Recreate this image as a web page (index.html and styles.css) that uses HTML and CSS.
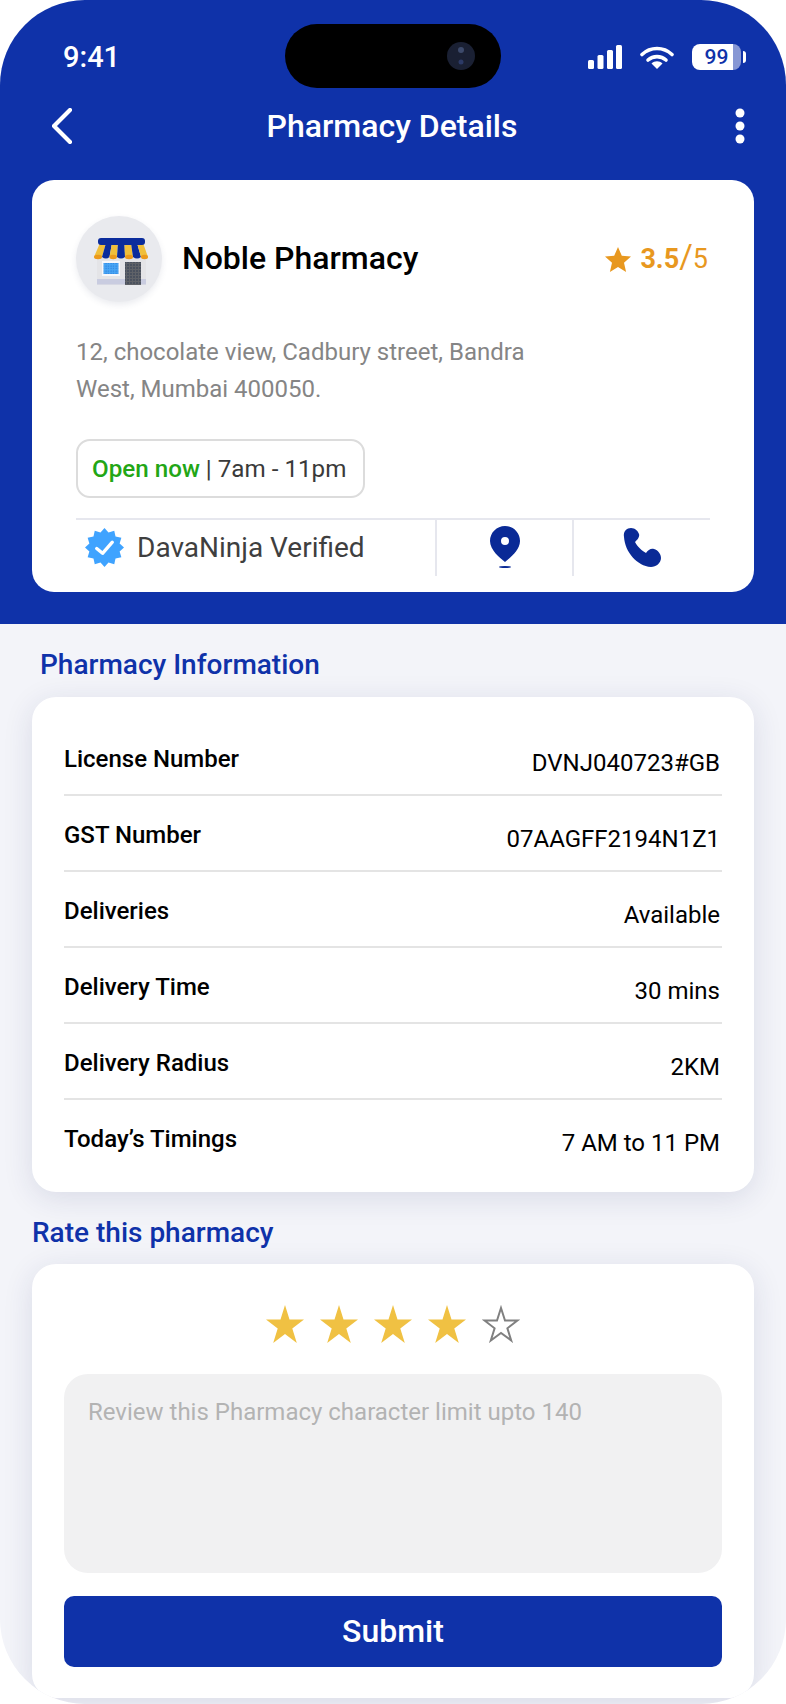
FILE: index.html
```html
<!DOCTYPE html>
<html lang="en">
<head>
    <meta charset="UTF-8">
    <meta name="viewport" content="width=device-width, initial-scale=1.0">
    <title>Pharmacy Details</title>
    <link rel="stylesheet" href="styles.css">
</head>
<body>
    <div class="phone">
        <header class="hero">
            <div class="status-bar">
                <span class="time">9:41</span>
                <div class="island">
                    <svg class="camera" viewBox="0 0 28 28">
                        <circle cx="14" cy="14" r="14" fill="#1a2033"/>
                        <circle cx="14" cy="8" r="3" fill="#3d4a6b"/>
                        <circle cx="14" cy="20" r="2.500" fill="#2c3a66"/>
                    </svg>
                </div>
                <div class="status-icons">
                    <svg class="signal" viewBox="0 0 34 24">
                        <rect x="0" y="15" width="6" height="9" rx="1.500"/>
                        <rect x="9.500" y="10" width="6" height="14" rx="1.500"/>
                        <rect x="19" y="5" width="6" height="19" rx="1.500"/>
                        <rect x="28" y="0" width="6" height="24" rx="1.500"/>
                    </svg>
                    <svg class="wifi" viewBox="0 0 34 24">
                        <path d="M2 9.500C10.500 1.500 23.500 1.500 32 9.500" fill="none" stroke="#fff" stroke-width="3.600" stroke-linecap="round"/>
                        <path d="M8 15C13 10.500 21 10.500 26 15" fill="none" stroke="#fff" stroke-width="3.600" stroke-linecap="round"/>
                        <path d="M11.500 18.500C14.500 15.500 19.500 15.500 22.500 18.500L17 24Z" fill="#fff"/>
                    </svg>
                    <div class="battery">99</div>
                </div>
            </div>

            <nav class="top-nav">
                <svg class="back" viewBox="0 0 20 36">
                    <path d="M18 2L2 18L18 34" fill="none" stroke="#fff" stroke-width="4.200" stroke-linecap="round" stroke-linejoin="round"/>
                </svg>
                <h1>Pharmacy Details</h1>
                <svg class="more" viewBox="0 0 10 36">
                    <circle cx="5" cy="5" r="4.500"/>
                    <circle cx="5" cy="18" r="4.500"/>
                    <circle cx="5" cy="31" r="4.500"/>
                </svg>
            </nav>

            <section class="store-card">
                <div class="store-top">
                    <div class="avatar">
                        <svg viewBox="6 6 86 86">
                            <defs>
                                <pattern id="speck" width="3" height="3" patternUnits="userSpaceOnUse">
                                    <rect width="3" height="3" fill="#5f6268"/>
                                    <circle cx="1" cy="1" r="0.800" fill="#2f3a52"/>
                                </pattern>
                                <pattern id="pane" width="2.500" height="2.500" patternUnits="userSpaceOnUse">
                                    <rect width="2.500" height="2.500" fill="#48a6f5"/>
                                    <circle cx="1" cy="1" r="0.600" fill="#2474d6"/>
                                </pattern>
                            </defs>
                            <rect x="27" y="46" width="49" height="29" fill="#e4e4e7"/>
                            <rect x="32" y="51" width="18" height="15" fill="#f6f7fb"/>
                            <rect x="33.500" y="53" width="15" height="11" fill="url(#pane)"/>
                            <rect x="27" y="69" width="28" height="5.500" fill="#c9cce0"/>
                            <rect x="71" y="69" width="5" height="5.500" fill="#c9cce0"/>
                            <rect x="55" y="52" width="16" height="23" fill="url(#speck)"/>
                            <path d="M30 33H36L32 47Q28 50 24 47Z" fill="#f0bf3b"/>
                            <path d="M36 33H42L39.500 47Q36 50 32 47Z" fill="#0b2c9c"/>
                            <path d="M42 33H48L47 47Q43 50 39.500 47Z" fill="#f0bf3b"/>
                            <path d="M48 33H54.500L55 47Q51 50 47 47Z" fill="#0b2c9c"/>
                            <path d="M54.500 33H61L63 47Q59 50 55 47Z" fill="#f0bf3b"/>
                            <path d="M61 33H67L71 47Q67 50 63 47Z" fill="#0b2c9c"/>
                            <path d="M67 33H73L78 47Q74.500 50 71 47Z" fill="#f0bf3b"/>
                            <ellipse cx="28" cy="47" rx="4" ry="2.200" fill="#ec9a1c"/>
                            <ellipse cx="43.200" cy="47" rx="3.700" ry="2.200" fill="#ec9a1c"/>
                            <ellipse cx="59" cy="47" rx="4" ry="2.200" fill="#ec9a1c"/>
                            <ellipse cx="74.500" cy="47" rx="3.500" ry="2.200" fill="#ec9a1c"/>
                            <rect x="28" y="28" width="47" height="7" rx="3" fill="#0b2c9c"/>
                        </svg>
                    </div>
                    <h2>Noble Pharmacy</h2>
                    <div class="rating">
                        <svg viewBox="0 0 26 25">
                            <polygon points="13,0 16.800,8.800 26,9.600 19,15.800 21.100,25 13,20.100 4.900,25 7,15.800 0,9.600 9.200,8.800"/>
                        </svg>
                        <span><b>3.5</b><span class="slash">/</span>5</span>
                    </div>
                </div>
                <p class="address">12, chocolate view, Cadbury street, Bandra<br>West, Mumbai 400050.</p>
                <div class="hours"><span class="open">Open now</span> | 7am - 11pm</div>
                <div class="store-actions">
                    <div class="verified">
                        <svg viewBox="0 0 40 40">
                            <polygon fill="#3fa3ff" points="40,20 35.500,24.100 37.300,30 31.300,31.300 30,37.300 24.100,35.500 20,40 15.900,35.500 10,37.300 8.700,31.300 2.700,30 4.500,24.100 0,20 4.500,15.900 2.700,10 8.700,8.700 10,2.700 15.900,4.500 20,0 24.100,4.500 30,2.700 31.300,8.700 37.300,10 35.500,15.900"/>
                            <path d="M12 21L18 26L28 14.500" fill="none" stroke="#fff" stroke-width="3.400" stroke-linecap="round" stroke-linejoin="round"/>
                        </svg>
                        <span>DavaNinja Verified</span>
                    </div>
                    <div class="action">
                        <svg class="pin" viewBox="0 0 30 42">
                            <path fill-rule="evenodd" d="M15 0C6.700 0 0 6.700 0 15C0 24 10 32 15 36C20 32 30 24 30 15C30 6.700 23.300 0 15 0ZM15 11A4 4 0 1 1 15 19A4 4 0 1 1 15 11Z"/>
                            <ellipse cx="15" cy="41" rx="6" ry="1"/>
                        </svg>
                    </div>
                    <div class="action">
                        <svg class="call" viewBox="0 0 38 39">
                            <path d="M1 9C0 3 4 0 8 0C12 0 15 3 16 6C17 9 14 12 12 14C14 18 19 23 23 25C25 22 28 20 31 21C35 22 38 26 38 30C38 35 33 39 28 39C14 38 2 24 1 9Z"/>
                        </svg>
                    </div>
                </div>
            </section>
        </header>

        <main class="content">
            <h3 class="info-title">Pharmacy Information</h3>
            <section class="card info-card">
                <div class="info-row"><span class="label">License Number</span><span class="value">DVNJ040723#GB</span></div>
                <div class="info-row"><span class="label">GST Number</span><span class="value">07AAGFF2194N1Z1</span></div>
                <div class="info-row"><span class="label">Deliveries</span><span class="value">Available</span></div>
                <div class="info-row"><span class="label">Delivery Time</span><span class="value">30 mins</span></div>
                <div class="info-row"><span class="label">Delivery Radius</span><span class="value">2KM</span></div>
                <div class="info-row"><span class="label">Today’s Timings</span><span class="value">7 AM to 11 PM</span></div>
            </section>

            <h3 class="rate-title">Rate this pharmacy</h3>
            <section class="card rate-card">
                <div class="stars">
                    <svg viewBox="0 0 38 38"><polygon class="on" points="19,0 23.500,14.500 38,14.500 26.300,23.500 30.800,38 19,29 7.200,38 11.700,23.500 0,14.500 14.500,14.500"/></svg>
                    <svg viewBox="0 0 38 38"><polygon class="on" points="19,0 23.500,14.500 38,14.500 26.300,23.500 30.800,38 19,29 7.200,38 11.700,23.500 0,14.500 14.500,14.500"/></svg>
                    <svg viewBox="0 0 38 38"><polygon class="on" points="19,0 23.500,14.500 38,14.500 26.300,23.500 30.800,38 19,29 7.200,38 11.700,23.500 0,14.500 14.500,14.500"/></svg>
                    <svg viewBox="0 0 38 38"><polygon class="on" points="19,0 23.500,14.500 38,14.500 26.300,23.500 30.800,38 19,29 7.200,38 11.700,23.500 0,14.500 14.500,14.500"/></svg>
                    <svg viewBox="0 0 38 38"><polygon class="off" points="19,3 23,15.500 35.500,15.500 25.400,23.300 29.200,35.500 19,27.900 8.800,35.500 12.600,23.300 2.500,15.500 15,15.500"/></svg>
                </div>
                <div class="review-box">Review this Pharmacy character limit upto 140</div>
                <button class="submit">Submit</button>
            </section>
        </main>
    </div>
</body>
</html>
```

FILE: styles.css
```css
body {
    margin: 0;
    padding: 0;
    background: #fff;
    font-family: Roboto, "Liberation Sans", sans-serif;
}

h1, h2, h3, p {
    margin: 0;
}

.phone {
    position: relative;
    width: 786px;
    height: 1704px;
    overflow: hidden;
    border-radius: 85px;
    background: #f3f4f9;
}

.hero {
    background: #0f32a9;
    color: #fff;
    height: 624px;
    box-sizing: border-box;
}

.status-bar {
    display: flex;
    justify-content: space-between;
    align-items: center;
    height: 100px;
    padding: 14px 45px 0 63px;
    box-sizing: border-box;
}

.time {
    font-size: 29px;
    font-weight: 500;
}

.island {
    position: absolute;
    left: 285px;
    top: 24px;
    width: 216px;
    height: 64px;
    border-radius: 32px;
    background: #000;
    display: flex;
    justify-content: flex-end;
    align-items: center;
    padding-right: 26px;
    box-sizing: border-box;
}

.camera {
    width: 28px;
    height: 28px;
}

.status-icons {
    display: flex;
    align-items: center;
    gap: 18px;
}

.signal {
    width: 34px;
    height: 24px;
    fill: #fff;
}

.wifi {
    width: 34px;
    height: 24px;
}

.battery {
    position: relative;
    width: 49px;
    height: 26px;
    border-radius: 8px;
    background: linear-gradient(to right, #fff 41px, #8797d4 41px);
    color: #0f32a9;
    font-size: 21px;
    font-weight: 500;
    line-height: 26px;
    text-align: center;
}

.battery::after {
    content: "";
    position: absolute;
    left: 51px;
    top: 7px;
    width: 3px;
    height: 12px;
    border-radius: 0 3px 3px 0;
    background: #fff;
}

.top-nav {
    display: grid;
    grid-template-columns: 1fr auto 1fr;
    align-items: center;
    height: 52px;
    padding: 0 41px 0 39px;
}

.top-nav h1 {
    font-size: 32px;
    font-weight: 500;
}

.back {
    width: 20px;
    height: 36px;
    margin-left: 13px;
}

.more {
    width: 10px;
    height: 36px;
    fill: #fff;
    justify-self: end;
}

.store-card {
    margin: 28px 32px 0;
    height: 412px;
    box-sizing: border-box;
    padding: 36px 44px 0 44px;
    background: #fff;
    border-radius: 22px;
    color: #000;
}

.store-top {
    display: flex;
    align-items: center;
}

.avatar {
    width: 86px;
    height: 86px;
    border-radius: 50%;
    background: #e9eaee;
    box-shadow: 0 3px 6px rgba(60, 70, 110, 0.1);
}

.avatar svg {
    display: block;
    width: 86px;
    height: 86px;
}

.store-top h2 {
    margin: 0 0 2px 20px;
    font-size: 32px;
    font-weight: 500;
}

.rating {
    margin-left: auto;
    margin-right: 2px;
    display: flex;
    align-items: center;
    gap: 9px;
    color: #e8981f;
    font-size: 27px;
}

.rating svg {
    width: 26px;
    height: 25px;
    fill: #e8981f;
}

.slash {
    font-size: 33px;
    font-weight: 400;
    line-height: 27px;
}

.address {
    margin-top: 32px;
    font-size: 24px;
    line-height: 37px;
    color: #858585;
}

.hours {
    display: inline-block;
    margin-top: 31px;
    height: 59px;
    line-height: 57px;
    padding: 0 17px 0 14px;
    box-sizing: border-box;
    border: 2px solid #dcdcdc;
    border-radius: 14px;
    font-size: 24.2px;
    color: #3a3a3a;
}

.open {
    color: #22a616;
    font-weight: 500;
}

.store-actions {
    display: flex;
    margin-top: 20px;
    height: 72px;
    border-top: 2px solid #e6e7ee;
}

.verified {
    display: flex;
    align-items: flex-start;
    width: 361px;
    padding: 8px 0 0 9px;
    box-sizing: border-box;
    border-right: 2px solid #e6e7ee;
    height: 56px;
    font-size: 28px;
    color: #3f3f3f;
    gap: 13px;
}

.verified svg {
    width: 39px;
    height: 39px;
}

.verified span {
    line-height: 40px;
}

.action {
    display: flex;
    justify-content: center;
    width: 137px;
    height: 56px;
    padding-top: 6px;
    box-sizing: border-box;
    border-right: 2px solid #e6e7ee;
}

.action:last-child {
    width: 136px;
    border-right: none;
}

.pin {
    width: 30px;
    height: 42px;
    fill: #0a2a96;
}

.call {
    width: 38px;
    height: 39px;
    margin-top: 2px;
    fill: #0a2a96;
}

.content {
    padding: 26px 32px 0;
}

.info-title {
    margin-left: 8px;
    font-size: 28px;
    font-weight: 500;
    line-height: 30px;
    color: #0f32a9;
}

.rate-title {
    margin-top: 26px;
    font-size: 28px;
    font-weight: 500;
    line-height: 30px;
    color: #0f32a9;
}

.card {
    background: #fff;
    border-radius: 24px;
    box-shadow: 0 6px 30px rgba(35, 45, 100, 0.12);
}

.info-card {
    margin-top: 17px;
    height: 495px;
    padding: 23px 32px 0;
    box-sizing: border-box;
}

.info-row {
    display: flex;
    justify-content: space-between;
    align-items: flex-start;
    height: 76px;
    box-sizing: border-box;
    border-bottom: 2px solid #e4e4e4;
    font-size: 24px;
    line-height: 28px;
    color: #000;
}

.info-row:last-child {
    border-bottom: none;
}

.label {
    margin-top: 25px;
    font-weight: 500;
}

.value {
    margin-top: 29px;
    margin-right: 2px;
}

.rate-card {
    margin-top: 16px;
    height: 434px;
    padding: 41px 32px 0;
    box-sizing: border-box;
}

.stars {
    display: flex;
    justify-content: center;
    gap: 16px;
}

.stars svg {
    width: 38px;
    height: 38px;
}

.stars .on {
    fill: #f0c143;
}

.stars .off {
    fill: #fff;
    stroke: #808080;
    stroke-width: 2;
}

.review-box {
    margin-top: 31px;
    height: 199px;
    padding: 23px 24px 0;
    box-sizing: border-box;
    border-radius: 24px;
    background: #f1f1f2;
    font-size: 24px;
    line-height: 30px;
    color: #b3b3b3;
}

.submit {
    display: block;
    width: 100%;
    height: 71px;
    margin-top: 23px;
    padding: 0 0 2px;
    border: none;
    border-radius: 10px;
    background: #0f32a9;
    color: #fff;
    font-family: inherit;
    font-size: 32px;
    font-weight: 500;
}
```
